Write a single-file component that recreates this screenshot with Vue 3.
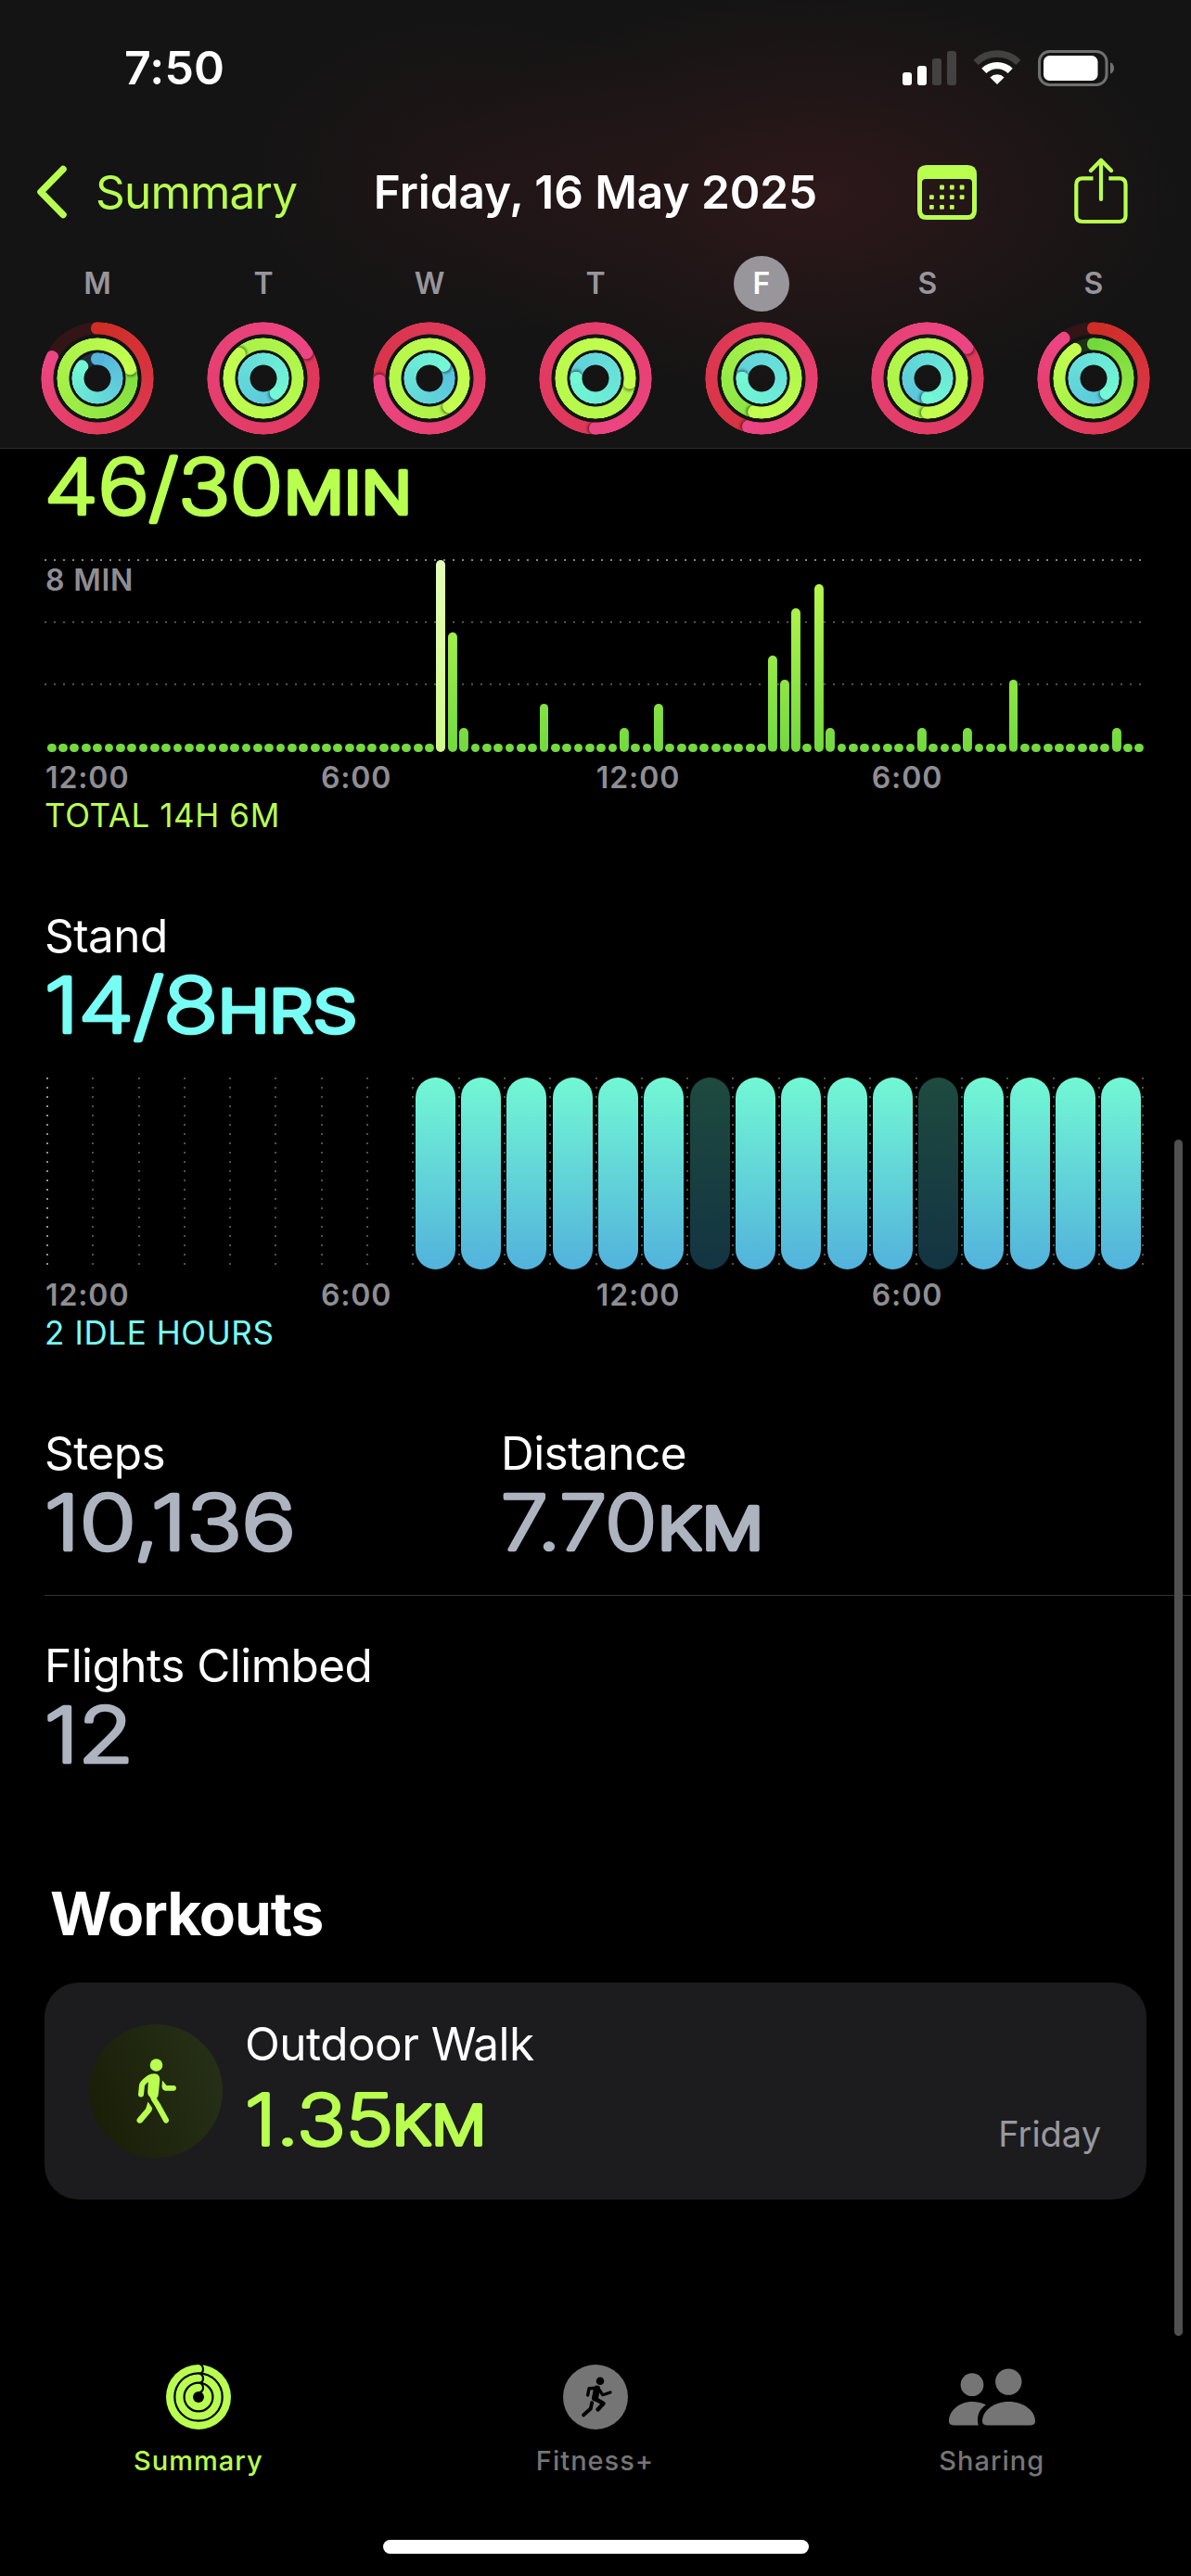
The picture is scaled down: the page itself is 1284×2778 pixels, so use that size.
<script setup>
import { ref, computed } from 'vue';

// end colours of the three rings and the tracks behind them
const ringTypes = {
  move: { size: 122, start: '#cf2d25', end: '#ec4583', track: '#331417' },
  exercise: { size: 88, start: '#72d93b', end: '#c4ff4f', track: '#1e3016' },
  stand: { size: 56, start: '#54b4dc', end: '#72f8d4', track: '#1e2c33' },
};

// tip = angle of the ring end, from = colour under the tip once the ring has closed
const days = ref([
  { letter: 'M', rings: [{ type: 'move', tip: 295 }, { type: 'exercise', tip: 73, from: '#7fdf3f' }, { type: 'stand', tip: 307 }] },
  { letter: 'T', rings: [{ type: 'move', tip: 59, from: '#dd3657' }, { type: 'exercise', tip: 315, from: '#a8f248' }, { type: 'stand', tip: 139, from: '#5ac6dc' }] },
  { letter: 'W', rings: [{ type: 'move', tip: 267, from: '#d83347' }, { type: 'exercise', tip: 145, from: '#aef349' }, { type: 'stand', tip: 48, from: '#57bedc' }] },
  { letter: 'T', rings: [{ type: 'move', tip: 180, from: '#de3758' }, { type: 'exercise', tip: 97, from: '#b2f54a' }, { type: 'stand', tip: 271, from: '#5fcedb' }] },
  { letter: 'F', active: true, rings: [{ type: 'move', tip: 195, from: '#d7323f' }, { type: 'exercise', tip: 192, from: '#8be544' }, { type: 'stand', tip: 271, from: '#60d0dc' }] },
  { letter: 'S', rings: [{ type: 'move', tip: 52, from: '#dc3657' }, { type: 'exercise', tip: 180, from: '#a8f248' }, { type: 'stand', tip: 180, from: '#58c2dc' }] },
  { letter: 'S', rings: [{ type: 'move', tip: 323 }, { type: 'exercise', tip: 327 }, { type: 'stand', tip: 139, from: '#5ac6dc' }] },
]);

const ringStyle = (ring) => {
  const t = ringTypes[ring.type];
  return { width: t.size + 'px', height: t.size + 'px' };
};

const ringFill = (ring) => {
  const t = ringTypes[ring.type];
  if (ring.from) {
    return { background: `conic-gradient(from ${ring.tip}deg, ${ring.from}, ${t.end})` };
  }
  return { background: `conic-gradient(${t.start}, ${t.end} ${ring.tip}deg, ${t.track} ${ring.tip}deg)` };
};

// exercise minutes for each quarter of an hour
const minutes = { 34: 8, 35: 5, 36: 1, 43: 2, 50: 1, 53: 2, 63: 4, 64: 3, 65: 6, 67: 7, 68: 1, 76: 1, 80: 1, 84: 3, 93: 1 };
const exerciseBars = computed(() =>
  Array.from({ length: 96 }, (_, i) => ({ id: i, value: minutes[i] || 0 }))
);
const barHeight = (value) => (value ? value * 25.9 : 9.4) + 'px';

// stand hours: the day starts at 8, two hours are idle
const idleHours = [14, 19];
const standHours = Array.from({ length: 24 }, (_, i) => ({
  id: i,
  state: i < 8 ? 'empty' : idleHours.includes(i) ? 'idle' : 'stood',
}));

const times = ['12:00', '6:00', '12:00', '6:00'];
const calendarDots = [[26.5, 24], [37.3, 24], [48.1, 24], [15.4, 34.7], [26.5, 34.7], [37.3, 34.7], [48.1, 34.7], [15.4, 45.3], [26.5, 45.3], [37.3, 45.3]];
</script>

<template>
  <div class="page">
    <header class="header">
      <div class="status">
        <span class="status__time">7:50</span>
        <div class="status__icons">
          <svg width="58" height="37" viewBox="0 0 58 37" fill="#fff">
            <rect x="0" y="23" width="10" height="14" rx="3" />
            <rect x="16" y="16" width="10" height="21" rx="3" />
            <rect x="32" y="8" width="10" height="29" rx="3" fill="#434142" />
            <rect x="48" y="0" width="10" height="37" rx="3" fill="#434142" />
          </svg>
          <svg width="52" height="38" viewBox="0 0 52 38" fill="none" stroke-width="7.4">
            <path d="M3.1 13.3A33 33 0 0 1 48.9 13.3" stroke="#434142" />
            <path d="M11.8 22.3A20.5 20.5 0 0 1 40.2 22.3" stroke="#fff" />
            <path d="M26 37L18.4 29.4A11 11 0 0 1 33.6 29.4Z" fill="#fff" />
          </svg>
          <svg width="83" height="39" viewBox="0 0 83 39">
            <rect x="1.5" y="1.5" width="72.5" height="36" rx="11" fill="none" stroke="#717071" stroke-width="3" />
            <rect x="6" y="6" width="58.5" height="27" rx="6.5" fill="#fff" />
            <path d="M78 13.2Q82 15 82 19.5T78 25.8Z" fill="#717071" />
          </svg>
        </div>
      </div>

      <nav class="nav">
        <a class="nav__back">
          <svg width="34" height="58" viewBox="0 0 34 58" fill="none" stroke="#b9ff4f" stroke-width="7.5" stroke-linecap="round" stroke-linejoin="round">
            <path d="M29 4.5L5 29L29 53.5" />
          </svg>
          <span>Summary</span>
        </a>
        <h1 class="nav__title">Friday, 16 May 2025</h1>
        <div class="nav__actions">
          <svg width="64" height="59" viewBox="0 0 64 59" fill="#b9ff4f">
            <path fill-rule="evenodd" d="M10 0H54Q64 0 64 10V49Q64 59 54 59H10Q0 59 0 49V10Q0 0 10 0ZM9 15Q5 15 5 19V49Q5 54 10 54H54Q59 54 59 49V19Q59 15 55 15Z" />
            <rect v-for="(dot, i) in calendarDots" :key="i" :x="dot[0] - 2.4" :y="dot[1] - 2.4" width="4.8" height="4.8" rx="1" />
          </svg>
          <svg class="nav__share" width="58" height="72" viewBox="0 0 58 72" fill="none" stroke="#b9ff4f" stroke-width="4.2" stroke-linecap="round" stroke-linejoin="round">
            <path d="M20.5 22.3H9Q2.3 22.3 2.3 29V62.5Q2.3 69 9 69H49Q55.5 69 55.5 62.5V29Q55.5 22.3 49 22.3H37.3" stroke-linecap="butt" />
            <path d="M29 3V45M18 14L29 2.7L40 14" />
          </svg>
        </div>
      </nav>

      <div class="week">
        <div v-for="(day, i) in days" :key="i" class="day">
          <span class="day__letter" :class="{ 'day__letter--active': day.active }">{{ day.letter }}</span>
          <div class="day__rings">
            <div v-for="ring in day.rings" :key="ring.type" class="ring" :style="ringStyle(ring)">
              <div class="ring__fill" :style="ringFill(ring)"></div>
              <div v-if="!ring.from" class="ring__arm">
                <span class="ring__cap" :style="{ background: ringTypes[ring.type].start }"></span>
              </div>
              <div class="ring__arm" :style="{ transform: `rotate(${ring.tip}deg)` }">
                <span class="ring__cap" :class="{ 'ring__cap--over': ring.from }" :style="{ background: ringTypes[ring.type].end }"></span>
              </div>
            </div>
          </div>
        </div>
      </div>
    </header>

    <main class="content">
      <!-- Exercise -->
      <section class="metric metric--exercise">
        <svg class="value" width="600" height="90" fill="#b9ff4f" stroke="#b9ff4f">
          <text x="0" y="69.5" textLength="257" lengthAdjust="spacingAndGlyphs">46/30</text>
          <text x="258" y="69.5" textLength="138" lengthAdjust="spacingAndGlyphs" class="value__unit">MIN</text>
        </svg>
        <div class="exercise-chart">
          <div class="exercise-chart__line exercise-chart__line--top"></div>
          <div class="exercise-chart__line"></div>
          <div class="exercise-chart__line"></div>
          <span class="exercise-chart__max">8 MIN</span>
          <div class="exercise-chart__bars">
            <div v-for="bar in exerciseBars" :key="bar.id" class="bar" :class="{ 'bar--max': bar.value === 8 }" :style="{ height: barHeight(bar.value) }"></div>
          </div>
        </div>
        <div class="times">
          <span v-for="(time, i) in times" :key="i">{{ time }}</span>
        </div>
        <p class="note note--exercise">TOTAL 14H 6M</p>
      </section>

      <!-- Stand -->
      <section class="metric metric--stand">
        <h2 class="label">Stand</h2>
        <svg class="value value--below" width="600" height="90" fill="#78fff5" stroke="#78fff5">
          <text x="0" y="69.5" textLength="187" lengthAdjust="spacingAndGlyphs">14/8</text>
          <text x="187" y="69.5" textLength="150" lengthAdjust="spacingAndGlyphs" class="value__unit">HRS</text>
        </svg>
        <div class="stand-chart">
          <div v-for="hour in standHours" :key="hour.id" class="hour">
            <div v-if="hour.state !== 'empty'" class="hour__pill" :class="'hour__pill--' + hour.state"></div>
          </div>
        </div>
        <div class="times">
          <span v-for="(time, i) in times" :key="i">{{ time }}</span>
        </div>
        <p class="note note--stand">2 IDLE HOURS</p>
      </section>

      <!-- Steps and distance -->
      <section class="totals">
        <div class="totals__item">
          <h2 class="label">Steps</h2>
          <svg class="value value--below" width="440" height="90" fill="#aeb3c0" stroke="#aeb3c0">
            <text x="0" y="69.5" textLength="271" lengthAdjust="spacingAndGlyphs">10,136</text>
          </svg>
        </div>
        <div class="totals__item">
          <h2 class="label">Distance</h2>
          <svg class="value value--below" width="440" height="90" fill="#aeb3c0" stroke="#aeb3c0">
            <text x="0" y="69.5" textLength="168" lengthAdjust="spacingAndGlyphs">7.70</text>
            <text x="169" y="69.5" textLength="114" lengthAdjust="spacingAndGlyphs" class="value__unit">KM</text>
          </svg>
        </div>
      </section>
      <section class="flights">
        <h2 class="label">Flights Climbed</h2>
        <svg class="value value--below" width="440" height="90" fill="#aeb3c0" stroke="#aeb3c0">
          <text x="0" y="69.5" textLength="96" lengthAdjust="spacingAndGlyphs">12</text>
        </svg>
      </section>

      <!-- Workouts -->
      <section class="workouts">
        <h2 class="workouts__title">Workouts</h2>
        <div class="workout">
          <div class="workout__icon">
            <svg width="43" height="70" viewBox="0 0 43 70" fill="none" stroke="#b9ff4f" stroke-width="6" stroke-linecap="round" stroke-linejoin="round">
              <circle cx="21.5" cy="7" r="6.8" fill="#b9ff4f" stroke="none" />
              <path d="M18 16.5C22.5 15.5 25.5 18.5 25.3 23L23.8 38C23.5 43 20.5 44.5 16.5 42.5C12.5 40.5 12 38 12.3 34L13 22Z" fill="#b9ff4f" stroke="none" />
              <path d="M17 19.5C13 20.5 6.5 26 6 29L5 38.5" />
              <path d="M17.5 40C19 46 22 47.5 23.5 51L32 66.5" />
              <path d="M12.5 46.5L17.3 53.5Q16.8 57 14 59.5L6 69Q3.2 71 .9 68.2Q-.2 66.5 1.2 64.5L10.2 54Z" fill="#b9ff4f" stroke="none" />
              <path d="M28 23.5L32.5 29H40.5Q43 29.3 43 31.8T40.5 34.8H32Q28 34.5 27.5 30.5Z" fill="#b9ff4f" stroke="none" />
            </svg>
          </div>
          <div class="workout__info">
            <h3 class="label">Outdoor Walk</h3>
            <svg class="value value--workout" width="400" height="90" fill="#b9ff4f" stroke="#b9ff4f">
              <text x="0" y="69.5" textLength="160" lengthAdjust="spacingAndGlyphs">1.35</text>
              <text x="159" y="69.5" textLength="101" lengthAdjust="spacingAndGlyphs" class="value__unit">KM</text>
            </svg>
          </div>
          <span class="workout__day">Friday</span>
        </div>
      </section>
    </main>

    <footer class="tabs">
      <a class="tab tab--active">
        <svg width="70" height="70" viewBox="0 0 70 70" fill="none" stroke="#000" stroke-width="2.2">
          <circle cx="35" cy="35" r="35" fill="#b9ff4f" stroke="none" />
          <circle cx="35" cy="35" r="25.7" />
          <circle cx="35" cy="35" r="15.4" />
          <circle cx="35" cy="35" r="6" fill="#000" stroke="none" />
          <path d="M36-1Q40 1 40 5T36 10M36 9.5Q40 11 40 15T36 20M36 19.5Q40 21 40 25T36 30" />
        </svg>
        <span>Summary</span>
      </a>
      <a class="tab">
        <svg width="70" height="70" viewBox="0 0 70 70" fill="none" stroke="#000" stroke-width="4" stroke-linecap="round" stroke-linejoin="round">
          <circle cx="35" cy="35" r="35" fill="#757575" stroke="none" />
          <circle cx="40" cy="17.8" r="4.3" fill="#000" stroke="none" />
          <path d="M36.5 26L34.5 36" stroke-width="7" />
          <path d="M37 25.2L28 25.8L26.7 33" stroke-width="3.4" />
          <path d="M39 27L42.8 32.8L51 30" stroke-width="3.2" />
          <path d="M34 36.5L43.5 42L37.5 48.5" stroke-width="4.4" />
          <path d="M31.2 41L29.8 47.5L22 54.5" stroke-width="3.8" />
        </svg>
        <span>Fitness+</span>
      </a>
      <a class="tab">
        <svg width="93" height="70" viewBox="0 -4 93 70" fill="#757575">
          <circle cx="25" cy="17.7" r="12.4" />
          <circle cx="64.3" cy="14.6" r="14.2" />
          <path d="M0 57C0 46 11 36 25 36C31 36 36 37.5 40 39.5C33 44 31 50 31 56Q31 59 31.9 61.4H5Q0 61.4 0 57Z" />
          <path d="M36 57C36 46 48 36 64.5 36S93 46 93 57Q93 61.4 88 61.4H41Q36 61.4 36 57Z" />
        </svg>
        <span>Sharing</span>
      </a>
    </footer>
    <div class="home-indicator"></div>
    <div class="scrollbar"></div>
  </div>
</template>

<style>
html, body {
  background: #000;
}
</style>

<style scoped>
.page {
  position: relative;
  display: flex;
  flex-direction: column;
  width: 1284px;
  height: 2778px;
  overflow: hidden;
  background: #000;
  color: #fff;
  font-family: Inter, "Liberation Sans", sans-serif;
}
.page h1, .page h2, .page h3, .page p {
  margin: 0;
}
.page svg {
  display: block;
  flex: none;
}

/* Header */
.header {
  box-sizing: border-box;
  height: 484px;
  border-bottom: 1px solid #2b2b2b;
  background:
    radial-gradient(ellipse 400px 220px at 875px 210px, rgba(72, 28, 32, 0.5), transparent),
    radial-gradient(ellipse 240px 180px at 500px 190px, rgba(60, 24, 30, 0.3), transparent),
    #141414;
}
.status {
  display: flex;
  align-items: center;
  justify-content: space-between;
  height: 146px;
  padding: 0 82px 0 134px;
}
.status__time {
  font-size: 50px;
  font-weight: 600;
  letter-spacing: 0.2px;
}
.status__icons {
  display: flex;
  align-items: center;
  gap: 18px;
}
.nav {
  display: grid;
  grid-template-columns: 366px 1fr 366px;
  align-items: center;
  height: 122px;
  font-size: 49.5px;
}
.nav__back {
  display: flex;
  align-items: center;
  gap: 30px;
  padding-left: 39px;
  color: #b9ff4f;
  letter-spacing: -0.8px;
}
.nav__title {
  text-align: center;
  font-size: 49.5px;
  font-weight: 600;
  letter-spacing: -0.05px;
  white-space: nowrap;
}
.nav__actions {
  display: flex;
  align-items: center;
  justify-content: flex-end;
  gap: 105px;
  padding-right: 68px;
}
.nav__share {
  margin-bottom: 3px;
}
.week {
  display: grid;
  grid-template-columns: repeat(7, 179px);
  justify-content: center;
  padding-top: 8px;
}
.day {
  display: flex;
  flex-direction: column;
  align-items: center;
  gap: 11px;
}
.day__letter {
  width: 60px;
  border-radius: 50%;
  color: #98959b;
  font-size: 32px;
  font-weight: 600;
  line-height: 60px;
  text-align: center;
}
.day__letter--active {
  background: #98959b;
  color: #fff;
}
.day__rings {
  display: grid;
  place-items: center;
}
.day__rings > * {
  grid-area: 1 / 1;
}
.ring {
  position: relative;
  border-radius: 50%;
  overflow: hidden;
  mask: radial-gradient(closest-side, transparent calc(100% - 13.9px), #000 calc(100% - 13.1px), #000 calc(100% - 0.7px), transparent 100%);
}
.ring__fill, .ring__arm {
  position: absolute;
  inset: 0;
}
.ring__fill {
  border-radius: 50%;
}
.ring__arm {
  display: flex;
  align-items: flex-start;
  justify-content: center;
}
.ring__cap {
  width: 13.5px;
  height: 13.5px;
  border-radius: 50%;
}
.ring__cap--over {
  box-shadow: 2px 0 3px rgba(0, 0, 0, 0.45);
}

/* Metrics */
.content {
  padding-left: 48px;
}
.label {
  height: 60px;
  font-size: 49.5px;
  font-weight: 400;
  line-height: 60px;
  letter-spacing: -0.55px;
  white-space: nowrap;
}
.value {
  overflow: visible;
  font-size: 81px;
  font-weight: 200;
  font-optical-sizing: none;
  stroke-width: 4.6px;
  stroke-linejoin: round;
}
.value__unit {
  font-size: 63px;
  font-weight: 300;
}
.value--below {
  margin-top: 4px;
}
.exercise-chart {
  position: relative;
  display: flex;
  flex-direction: column;
  gap: 65px;
  width: 1188px;
  height: 208px;
  margin-top: 29px;
}
.exercise-chart__line {
  width: 1183px;
  height: 2px;
  background: repeating-linear-gradient(90deg, #505050 0 2px, transparent 2px 10px);
}
.exercise-chart__line--top {
  background: repeating-linear-gradient(90deg, #858585 0 2px, transparent 2px 10px);
}
/* the caption and the bars lie over the dotted lines */
.exercise-chart__max {
  position: absolute;
  top: 4px;
  left: 1px;
  color: #8e8e93;
  font-size: 32px;
  font-weight: 600;
  line-height: 37px;
  letter-spacing: 0.8px;
}
.exercise-chart__bars {
  position: absolute;
  inset: 0 auto 0 2.8px;
  display: flex;
  align-items: flex-end;
  justify-content: space-between;
  width: 1182.5px;
}
.bar {
  width: 9.8px;
  border-radius: 5px;
  background: linear-gradient(#bffb4e, #72d93f) bottom / 100% 207px no-repeat;
}
.bar--max {
  background: linear-gradient(#e2fdb8, #d2f98a);
}
.times {
  display: grid;
  grid-template-columns: repeat(4, 296.9px);
  margin-top: 10px;
  padding-left: 1px;
  color: #8e8e93;
  font-size: 32px;
  font-weight: 600;
  line-height: 36px;
  letter-spacing: 0.9px;
}
.note {
  font-size: 35px;
  line-height: 45px;
  letter-spacing: 0.6px;
}
.note--exercise {
  color: #b9ff4f;
}
.note--stand {
  color: #78fff5;
}
.metric--stand, .totals {
  margin-top: 77px;
}
.stand-chart {
  display: grid;
  grid-template-columns: repeat(24, 49.3px);
  width: 1186px;
  height: 207px;
  margin: 29px 0 0 2px;
}
.hour {
  display: flex;
  padding-left: 3.5px;
  background: repeating-linear-gradient(#505050 0 2px, transparent 2px 10px) 0 0 / 2px 202px no-repeat;
}
.hour:first-child {
  background-image: repeating-linear-gradient(#909090 0 2px, transparent 2px 10px);
}
.hour:last-child {
  padding-right: 2px;
  background:
    repeating-linear-gradient(#505050 0 2px, transparent 2px 10px) 0 0 / 2px 202px no-repeat,
    repeating-linear-gradient(#505050 0 2px, transparent 2px 10px) 100% 0 / 2px 202px no-repeat;
}
.hour__pill {
  width: 43px;
  height: 207px;
  border-radius: 21.5px;
}
.hour__pill--stood {
  background: linear-gradient(#72f8d4, #52b2dc);
}
.hour__pill--idle {
  background: linear-gradient(#1e4a3f, #133442);
}
.totals {
  display: grid;
  grid-template-columns: 492px 1fr;
  padding-bottom: 29px;
  border-bottom: 1px solid #333;
}
.flights {
  padding-top: 45px;
}

/* Workouts */
.workouts {
  margin-top: 104px;
}
.workouts__title {
  padding-left: 6px;
  font-size: 64px;
  font-weight: 700;
  line-height: 80px;
  letter-spacing: -1.1px;
}
.workout {
  box-sizing: border-box;
  display: flex;
  width: 1188px;
  height: 234px;
  margin-top: 34px;
  padding: 36px 49px 0 48px;
  border-radius: 37px;
  background: #1c1c1e;
}
.workout__icon {
  display: flex;
  align-items: center;
  justify-content: center;
  width: 144px;
  height: 144px;
  margin: 9px 24px 0 0;
  border-radius: 50%;
  background: linear-gradient(70deg, #191c06, #273219);
}
.workout__info {
  flex: 1;
}
.value--workout {
  margin-top: 9px;
  font-size: 75px;
  stroke-width: 4px;
}
.value--workout .value__unit {
  font-size: 59px;
}
.workout__day {
  margin-top: 103px;
  color: #98989f;
  font-size: 38px;
  line-height: 48px;
}

/* Tab bar */
.tabs {
  display: grid;
  grid-template-columns: repeat(3, 427.7px);
  margin-top: 178px;
}
.tab {
  display: flex;
  flex-direction: column;
  align-items: center;
  gap: 16px;
  color: #757575;
  font-size: 29px;
  font-weight: 500;
  line-height: 36px;
  letter-spacing: 1px;
}
.tab--active {
  color: #b9ff4f;
}
.home-indicator {
  width: 459px;
  height: 15px;
  margin: 67px auto 0;
  border-radius: 8px;
  background: #fff;
}
.scrollbar {
  position: absolute;
  top: 1229px;
  right: 9px;
  width: 9px;
  height: 1290px;
  border-radius: 5px;
  background: #505050;
}
</style>
